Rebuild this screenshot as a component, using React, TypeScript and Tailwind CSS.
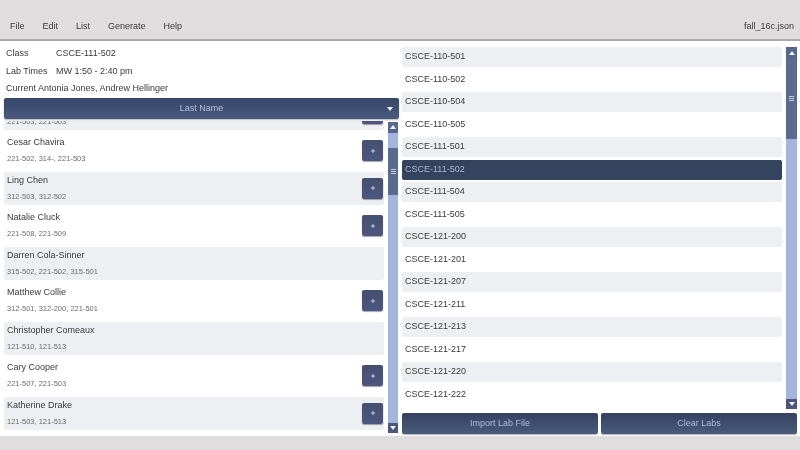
import React from "react";
import { Plus } from "lucide-react";

const students = [
  { name: "", labs: "221-503, 221-503", add: true },
  { name: "Cesar Chavira", labs: "221-502, 314-, 221-503", add: true },
  { name: "Ling Chen", labs: "312-503, 312-502", add: true },
  { name: "Natalie Cluck", labs: "221-508, 221-509", add: true },
  { name: "Darren Cola-Sinner", labs: "315-502, 221-502, 315-501", add: false },
  { name: "Matthew Collie", labs: "312-501, 312-200, 221-501", add: true },
  { name: "Christopher Comeaux", labs: "121-510, 121-513", add: false },
  { name: "Cary Cooper", labs: "221-507, 221-503", add: true },
  { name: "Katherine Drake", labs: "121-503, 121-513", add: true },
];

const sections = [
  "CSCE-110-501",
  "CSCE-110-502",
  "CSCE-110-504",
  "CSCE-110-505",
  "CSCE-111-501",
  "CSCE-111-502",
  "CSCE-111-504",
  "CSCE-111-505",
  "CSCE-121-200",
  "CSCE-121-201",
  "CSCE-121-207",
  "CSCE-121-211",
  "CSCE-121-213",
  "CSCE-121-217",
  "CSCE-121-220",
  "CSCE-121-222",
];

function Arrow({ up }: { up?: boolean }) {
  return (
    <svg width="6" height="4" viewBox="0 0 6 4" className={up ? "rotate-180" : ""}>
      <path d="M0 0h6L3 4z" fill="#f1f3f8" />
    </svg>
  );
}

function Scrollbar({ before, thumb }: { before: string; thumb: string }) {
  return (
    <div className="flex h-full flex-col bg-[#a3b5dc]">
      <div className="flex h-[11px] shrink-0 items-center justify-center bg-[#56688a]">
        <Arrow up />
      </div>
      <div className={before} />
      <div className={thumb}>
        <div className="h-px w-[5px] bg-[#c3cede]" />
        <div className="h-px w-[5px] bg-[#c3cede]" />
        <div className="h-px w-[5px] bg-[#c3cede]" />
      </div>
      <div className="flex-1" />
      <div className="flex h-[10px] shrink-0 items-center justify-center bg-[#4d5678]">
        <Arrow />
      </div>
    </div>
  );
}

function DarkButton({ label }: { label: string }) {
  return (
    <button className="h-[21px] flex-1 rounded-[2px] bg-gradient-to-b from-[#34425f] to-[#4a5c7c] text-[9px] text-[#aebcdb] shadow-[0_1px_1px_rgba(0,0,0,0.3)]">
      {label}
    </button>
  );
}

export default function App() {
  return (
    <div className="flex h-[450px] w-[800px] flex-col overflow-hidden bg-white text-[9px] text-[#3a3a3a] blur-[0.35px] [font-family:'Liberation_Sans',Arial,sans-serif]">
      <div className="flex h-[41px] shrink-0 items-end justify-between border-b-2 border-[#a9a9a9] bg-[#dfdddd] pb-[6px] pl-[10px] pr-[6px]">
        <div className="flex gap-[18px]">
          <span>File</span>
          <span>Edit</span>
          <span>List</span>
          <span>Generate</span>
          <span>Help</span>
        </div>
        <span>fall_16c.json</span>
      </div>

      <div className="flex min-h-0 flex-1">
        {/* left side */}
        <div className="flex w-[402px] shrink-0 flex-col pl-[4px] pr-[3px]">
          <div className="flex flex-col pt-[4px]">
            <div className="flex h-[17.5px] items-center pl-[2px]">
              <span className="w-[50px]">Class</span>
              <span>CSCE-111-502</span>
            </div>
            <div className="flex h-[17.5px] items-center pl-[2px]">
              <span className="w-[50px]">Lab Times</span>
              <span>MW 1:50 - 2:40 pm</span>
            </div>
            <div className="flex h-[17.5px] items-center gap-[2px] pl-[2px]">
              <span>Current</span>
              <span>Antonia Jones, Andrew Hellinger</span>
            </div>
          </div>
          <div className="relative z-10 flex h-[21px] shrink-0 items-center justify-center rounded-[2px] bg-gradient-to-b from-[#36466a] to-[#4a5a7c] pt-[1px] text-[#b4c1de] shadow-[0_1px_2px_rgba(0,0,0,0.3)]">
            Last Name
            <div className="absolute right-[6px] top-[9px]">
              <Arrow />
            </div>
          </div>
          <div className="flex h-[314px] shrink-0">
            <div className="mt-[2px] w-[380px] shrink-0 overflow-hidden">
              <div className="-mt-[23.5px] flex flex-col gap-[4.5px]">
                {students.map((s, i) => (
                  <div
                    key={s.labs}
                    className={`flex h-[33px] shrink-0 items-start justify-between rounded-[2px] pl-[3px] pr-[1px] ${
                      i % 2 === 0 ? "bg-[#edeff3]" : "bg-white"
                    }`}
                  >
                    <div className="flex flex-col">
                      <div className="flex h-[17px] items-center">{s.name}</div>
                      <div className="flex h-[15px] items-center text-[7.5px] text-[#6b6b6b]">{s.labs}</div>
                    </div>
                    {s.add && (
                      <button className="mt-[5.5px] flex h-[21px] w-[21px] items-center justify-center rounded-[2px] bg-gradient-to-b from-[#44506f] to-[#4d5680] shadow-[0_1px_1px_rgba(0,0,0,0.35)]">
                        <Plus size={6} strokeWidth={3} color="#e6e9f2" />
                      </button>
                    )}
                  </div>
                ))}
              </div>
            </div>
            <div className="ml-[4px] w-[10px] shrink-0 pt-[3px]">
              <Scrollbar
                before="h-[15px] shrink-0"
                thumb="flex h-[47px] shrink-0 flex-col items-center justify-center gap-px bg-[#5a6c8e]"
              />
            </div>
          </div>
        </div>

        {/* right side */}
        <div className="flex flex-1 flex-col pt-[6px] pr-[3px]">
          <div className="flex h-[362px] shrink-0">
            <div className="flex w-[380px] shrink-0 flex-col gap-[2.5px]">
              {sections.map((s, i) => (
                <div
                  key={s}
                  className={`flex h-[20px] shrink-0 items-center rounded-[2px] pl-[3px] ${
                    s === "CSCE-111-502"
                      ? "bg-[#34445e] text-[#a6b8d8]"
                      : i % 2 === 0
                        ? "bg-[#edeff2]"
                        : "bg-white"
                  }`}
                >
                  {s}
                </div>
              ))}
            </div>
            <div className="ml-[4px] w-[11px] shrink-0">
              <Scrollbar
                before="h-0"
                thumb="flex h-[81px] shrink-0 flex-col items-center justify-center gap-px bg-[#5a6c8e]"
              />
            </div>
          </div>
          <div className="mt-[4px] flex gap-[3px]">
            <DarkButton label="Import Lab File" />
            <DarkButton label="Clear Labs" />
          </div>
        </div>
      </div>

      <div className="h-[14px] shrink-0 bg-[#dfdddd]" />
    </div>
  );
}
